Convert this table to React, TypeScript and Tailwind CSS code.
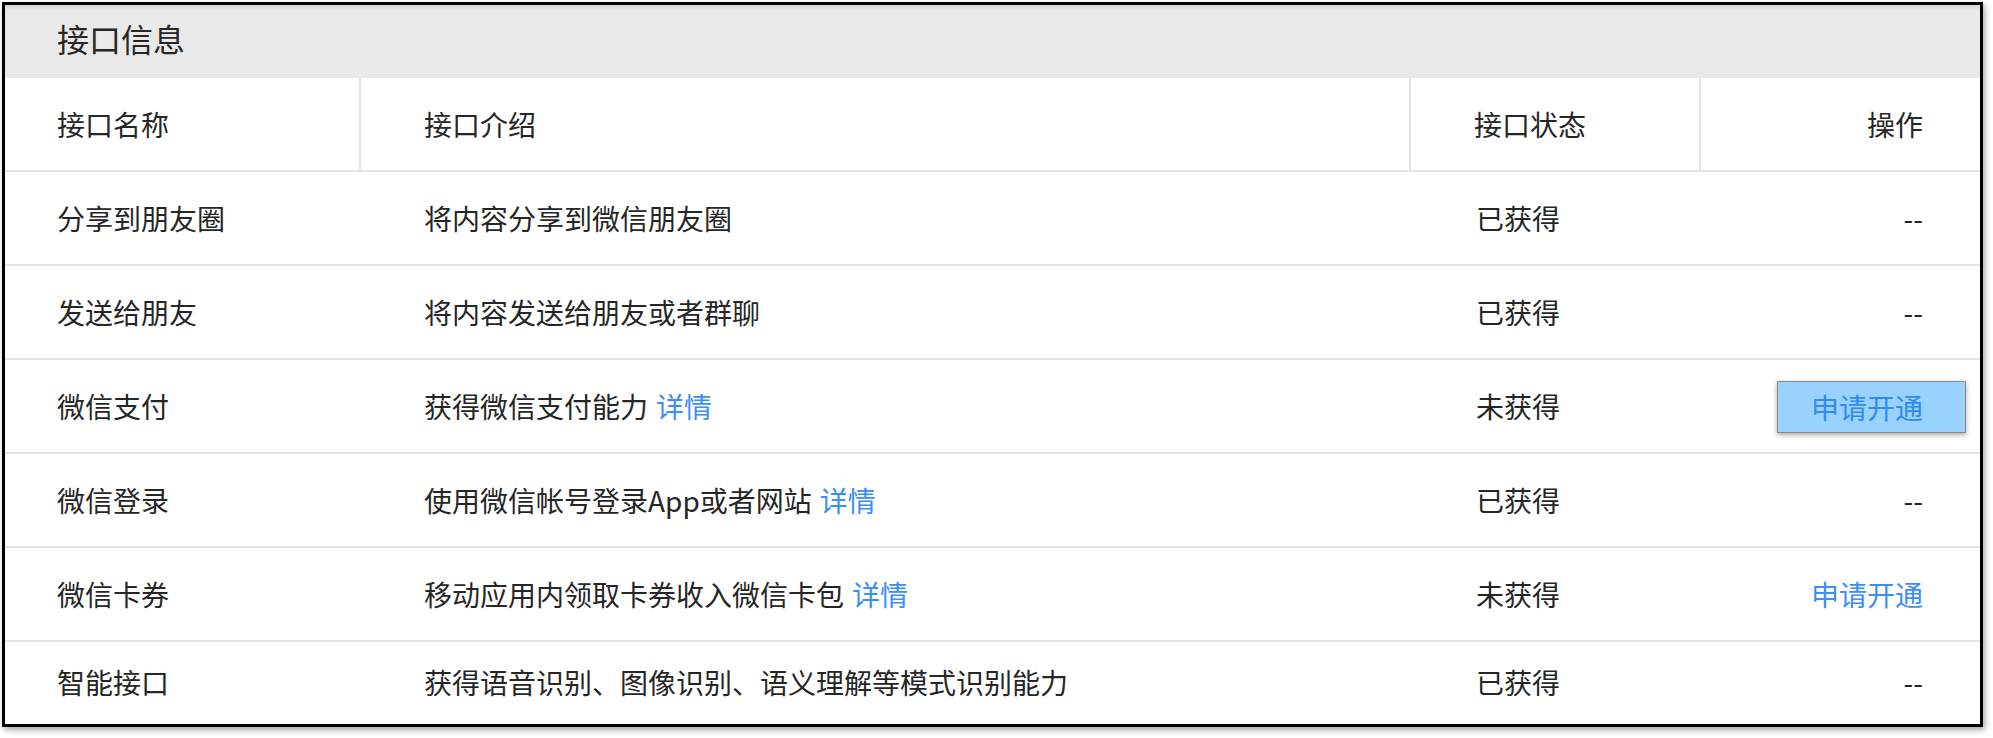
const ROWS = [
  { name: "分享到朋友圈", intro: "将内容分享到微信朋友圈", detail: false, status: "已获得", op: "none" },
  { name: "发送给朋友", intro: "将内容发送给朋友或者群聊", detail: false, status: "已获得", op: "none" },
  { name: "微信支付", intro: "获得微信支付能力", detail: true, status: "未获得", op: "button" },
  { name: "微信登录", intro: "使用微信帐号登录App或者网站", detail: true, status: "已获得", op: "none" },
  { name: "微信卡券", intro: "移动应用内领取卡券收入微信卡包", detail: true, status: "未获得", op: "link" },
  { name: "智能接口", intro: "获得语音识别、图像识别、语义理解等模式识别能力", detail: false, status: "已获得", op: "none" },
];

function Op({ kind }: { kind: string }) {
  if (kind === "button") {
    return (
      <span className="inline-flex items-center h-[52px] pl-[33px] pr-[42px] -mr-[43px] mt-[2px] bg-[#99d1ff] border border-[#8a8a8a] text-[#2f8cf0] shadow-[0_2px_5px_rgba(0,0,0,0.35)]">
        申请开通
      </span>
    );
  }
  if (kind === "link") {
    return <span className="text-[#3a8ef6]">申请开通</span>;
  }
  return <span>--</span>;
}

export default function App() {
  return (
    <div className="min-h-screen bg-white pl-[2px] pt-[2px] font-['Noto_Sans_CJK_SC',sans-serif] text-[28px] leading-none text-[#262626]">
      <div className="w-[1981px] h-[725px] border-[3px] border-black bg-white overflow-hidden shadow-[2px_3px_6px_rgba(0,0,0,0.35)]">
        <div className="h-[73px] bg-[#e9e9e9] pl-[52px] flex items-center pb-[8px] text-[32px] shadow-[inset_0_4px_5px_-3px_rgba(0,0,0,0.15)]">
          接口信息
        </div>

        <div className="grid grid-cols-[356px_1050px_290px_1fr] h-[94px] border-b-2 border-[#e3e3e3]">
          <div className="flex items-center pl-[52px] border-r-2 border-[#e3e3e3]">接口名称</div>
          <div className="flex items-center pl-[63px] border-r-2 border-[#e3e3e3]">接口介绍</div>
          <div className="flex items-center pl-[63px] border-r-2 border-[#e3e3e3]">接口状态</div>
          <div className="flex items-center justify-end pr-[57px]">操作</div>
        </div>

        {ROWS.map((row, i) => (
          <div
            key={row.name}
            className={
              i === ROWS.length - 1
                ? "grid grid-cols-[356px_1050px_290px_1fr] h-[80px]"
                : "grid grid-cols-[356px_1050px_290px_1fr] h-[94px] border-b-2 border-[#e3e3e3]"
            }
          >
            <div className="flex items-center pl-[52px]">{row.name}</div>
            <div className="flex items-center pl-[63px]">
              {row.intro}
              {row.detail && <span className="ml-[8px] text-[#3a8ef6]">详情</span>}
            </div>
            <div className="flex items-center pl-[65px]">{row.status}</div>
            <div className="flex items-center justify-end pr-[57px]">
              <Op kind={row.op} />
            </div>
          </div>
        ))}
      </div>
    </div>
  );
}
